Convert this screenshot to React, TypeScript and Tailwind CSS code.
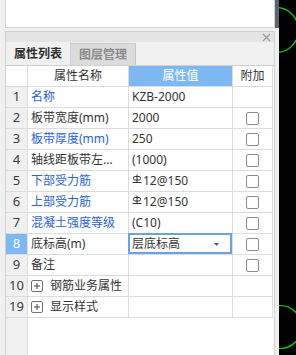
import React from 'react';

type Row = {
  no: string;
  name: string;
  blue?: boolean;
  value?: React.ReactNode;
  check?: boolean;
  group?: boolean;
  active?: boolean;
};

const Rebar: React.FC = () => (
  <svg width="10" height="10" viewBox="0 0 10 10" className="inline-block mr-[1px] -mt-[4px] align-middle">
    <path d="M5 0.5V8.5" stroke="#333" strokeWidth="1" fill="none" />
    <rect x="1.5" y="2.5" width="7" height="3.5" rx="1.5" stroke="#333" strokeWidth="1" fill="none" />
    <path d="M0.5 8.5H9.5" stroke="#333" strokeWidth="1" fill="none" />
  </svg>
);

const rows: Row[] = [
  { no: '1', name: '名称', blue: true, value: 'KZB-2000' },
  { no: '2', name: '板带宽度(mm)', value: '2000', check: true },
  { no: '3', name: '板带厚度(mm)', blue: true, value: '250', check: true },
  { no: '4', name: '轴线距板带左...', value: '(1000)', check: true },
  { no: '5', name: '下部受力筋', blue: true, value: <><Rebar />12@150</>, check: true },
  { no: '6', name: '上部受力筋', blue: true, value: <><Rebar />12@150</>, check: true },
  { no: '7', name: '混凝土强度等级', blue: true, value: '(C10)', check: true },
  { no: '8', name: '底标高(m)', value: '层底标高', check: true, active: true },
  { no: '9', name: '备注', check: true },
  { no: '10', name: '钢筋业务属性', group: true },
  { no: '19', name: '显示样式', group: true },
];

const Checkbox: React.FC = () => (
  <div className="w-[13px] h-[13px] rounded-[2px] border border-[#8c8c8c] bg-white" />
);

const PlusBox: React.FC = () => (
  <div className="w-[12px] h-[12px] rounded-[2px] border border-[#707070] flex items-center justify-center">
    <svg width="8" height="8" viewBox="0 0 8 8">
      <path d="M4 1V7M1 4H7" stroke="#444" strokeWidth="1" />
    </svg>
  </div>
);

const cell = 'h-[21px] border-r border-b border-[#dcdcdc] flex items-center';

const App: React.FC = () => {
  return (
    <div
      className="flex w-[296px] h-[355px] overflow-hidden bg-[#f0f0f0] text-[12px] text-[#333]"
      style={{ fontFamily: '"Noto Sans", "Noto Sans CJK SC", sans-serif' }}
    >
      <div className="w-[279px] flex flex-col">
        <div className="flex h-[28px] shrink-0">
          <div className="ml-[5px] w-[270px] h-full bg-white border-x border-b border-[#d4d4d4]" />
          <div className="w-[4px] h-full bg-[#5d6670]" />
        </div>

        <div className="mt-[3px] ml-[5px] w-[270px] flex-1 flex flex-col border-x border-t border-[#d0d0d0] bg-white">
          <div className="h-[10px] bg-[#e4e4e4] flex items-center justify-end pr-[3px]">
            <svg width="9" height="9" viewBox="0 0 9 9">
              <path d="M1 1L8 8M8 1L1 8" stroke="#9a9a9a" strokeWidth="1.2" />
            </svg>
          </div>

          <div className="h-[24px] bg-[#f0f0f0] border-b border-[#d0d0d0] flex">
            <div className="w-[65px] border-r border-[#d0d0d0] flex items-center justify-center font-bold text-[#2e2e2e]">
              属性列表
            </div>
            <div className="w-[65px] mt-[1px] bg-[#dcdcdc] border-r border-t border-[#c8c8c8] flex items-center justify-center font-bold text-[#8a8a8a]">
              图层管理
            </div>
          </div>

          <div className="grid grid-cols-[22px_101px_104px_40px] w-[267px]">
            <div className={`${cell} bg-white`} />
            <div className={`${cell} justify-center`}>属性名称</div>
            <div className={`${cell} justify-center bg-[#7db8f3] text-white`}>属性值</div>
            <div className={`${cell} justify-center`}>附加</div>

            {rows.map((r) => (
              <React.Fragment key={r.no}>
                <div
                  className={`${cell} justify-center ${
                    r.active ? 'bg-[#7db8f3] text-white' : 'bg-[#f0f0f0] text-[#3a3a3a]'
                  } text-[13px]`}
                >
                  {r.no}
                </div>
                <div className={`${cell} pl-[3px] whitespace-nowrap overflow-hidden ${r.blue ? 'text-[#2a62d6]' : ''}`}>
                  {r.group && (
                    <span className="mr-[7px]">
                      <PlusBox />
                    </span>
                  )}
                  {r.name}
                </div>
                <div className={`${cell} relative pl-[3px] whitespace-nowrap`}>
                  {r.value}
                  {r.active && (
                    <>
                      <div className="absolute -left-[1px] -top-[1px] right-0 bottom-0 border-2 border-[#6aa3dd]" />
                      <svg width="5" height="3" viewBox="0 0 5 3" className="absolute right-[13px] top-[9px]">
                        <path d="M0 0H5L2.5 3Z" fill="#555" />
                      </svg>
                    </>
                  )}
                </div>
                <div className={`${cell} justify-center`}>{r.check && <Checkbox />}</div>
              </React.Fragment>
            ))}
          </div>

          <div className="flex-1 flex">
            <div className="w-[22px] bg-[#f0f0f0] border-r border-[#dcdcdc]" />
          </div>
        </div>
      </div>

      <div className="w-[17px] h-full bg-black">
        <svg width="17" height="355" viewBox="0 0 17 355">
          <circle cx="-3" cy="30" r="22.5" stroke="#19d419" strokeWidth="1.2" fill="none" />
          <circle cx="1" cy="327" r="21.5" stroke="#19d419" strokeWidth="1.2" fill="none" />
        </svg>
      </div>
    </div>
  );
};

export default App;
